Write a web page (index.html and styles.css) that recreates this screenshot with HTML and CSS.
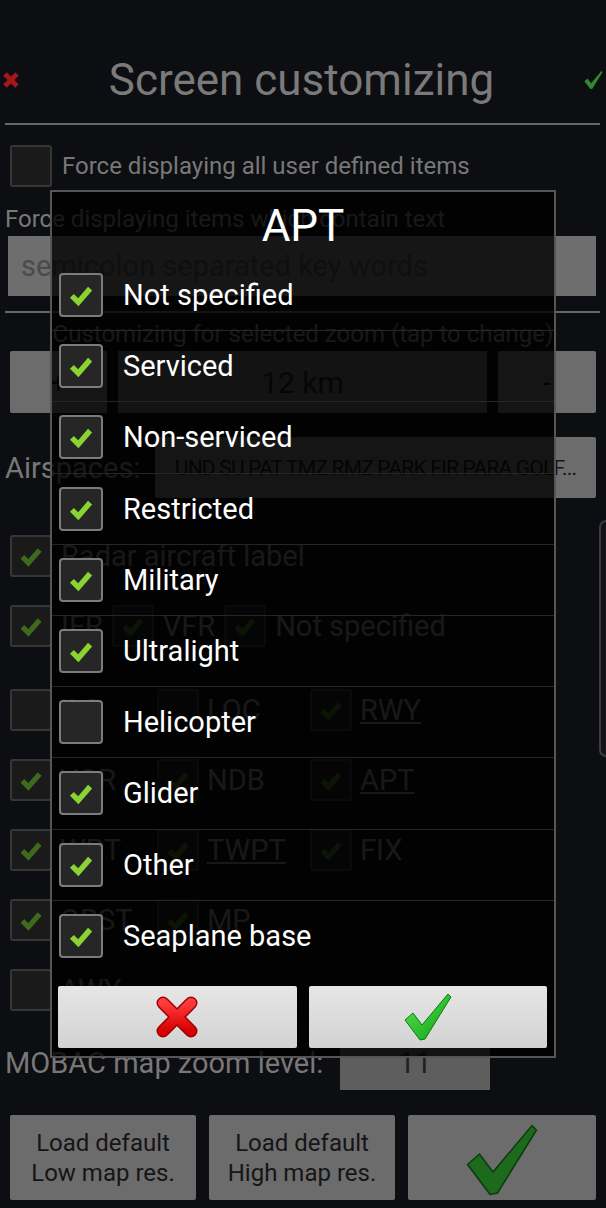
FILE: index.html
```html
<!DOCTYPE html>
<html lang="en">
<head>
    <meta charset="UTF-8">
    <meta name="viewport" content="width=device-width, initial-scale=1.0">
    <title>Screen customizing</title>
    <link rel="stylesheet" href="styles.css">
</head>
<body>
    <svg class="defs" width="0" height="0">
        <symbol id="tick" viewBox="0 0 44 44">
            <path d="M12 23l7 7 13-15" fill="none" stroke="currentColor" stroke-width="6"/>
        </symbol>
        <symbol id="bigcheck" viewBox="0 0 48 48">
            <polygon points="1,27 9,20 18,32 44,1 47,4 21,46 16,47"/>
        </symbol>
    </svg>

    <div class="screen">
        <header class="topbar">
            <svg class="top-cancel" viewBox="0 0 16 16"><path d="M2 2l12 12M14 2L2 14"/></svg>
            <h1 class="title">Screen customizing</h1>
            <svg class="top-ok" viewBox="0 0 48 48"><use href="#bigcheck"/></svg>
        </header>
        <hr class="rule">

        <div class="opt first">
            <span class="box"></span>
            <span>Force displaying all user defined items</span>
        </div>
        <p class="caption">Force displaying items which contain text</p>
        <div class="input">semicolon separated key words</div>
        <hr class="rule rule-2">

        <p class="caption zoom-caption">Customizing for selected zoom (tap to change)</p>
        <div class="zoom-row">
            <div class="btn">+</div>
            <div class="field">12 km</div>
            <div class="btn">-</div>
        </div>

        <div class="air-row">
            <span>Airspaces:</span>
            <div class="btn air-btn">UND SU PAT TMZ RMZ PARK FIR PARA GOLF...</div>
        </div>

        <div class="opt radar">
            <span class="box"><svg class="tick"><use href="#tick"/></svg></span>
            <span>Radar aircraft label</span>
        </div>
        <div class="opt">
            <span class="box"><svg class="tick"><use href="#tick"/></svg></span>
            <span>IFR</span>
            <span class="box"><svg class="tick"><use href="#tick"/></svg></span>
            <span>VFR</span>
            <span class="box"><svg class="tick"><use href="#tick"/></svg></span>
            <span>Not specified</span>
        </div>

        <div class="grid">
            <div class="cell"><span class="box"></span><span>ILS</span></div>
            <div class="cell"><span class="box"></span><span>LOC</span></div>
            <div class="cell"><span class="box"><svg class="tick"><use href="#tick"/></svg></span><span class="link">RWY</span></div>

            <div class="cell"><span class="box"><svg class="tick"><use href="#tick"/></svg></span><span>VOR</span></div>
            <div class="cell"><span class="box"><svg class="tick"><use href="#tick"/></svg></span><span>NDB</span></div>
            <div class="cell"><span class="box"><svg class="tick"><use href="#tick"/></svg></span><span class="link">APT</span></div>

            <div class="cell"><span class="box"><svg class="tick"><use href="#tick"/></svg></span><span>WPT</span></div>
            <div class="cell"><span class="box"><svg class="tick"><use href="#tick"/></svg></span><span class="link">TWPT</span></div>
            <div class="cell"><span class="box"><svg class="tick"><use href="#tick"/></svg></span><span>FIX</span></div>

            <div class="cell"><span class="box"><svg class="tick"><use href="#tick"/></svg></span><span>OBST</span></div>
            <div class="cell"><span class="box"><svg class="tick"><use href="#tick"/></svg></span><span>MP</span></div>
            <div class="cell"></div>

            <div class="cell"><span class="box"></span><span>AWY</span></div>
        </div>

        <div class="mobac-row">
            <span>MOBAC map zoom level:</span>
            <div class="field mobac-field">11</div>
        </div>

        <div class="bottom-row">
            <div class="btn big-btn">Load default<br>Low map res.</div>
            <div class="btn big-btn">Load default<br>High map res.</div>
            <div class="btn big-btn"><svg class="save-check" viewBox="0 0 48 48"><use href="#bigcheck"/></svg></div>
        </div>
    </div>

    <div class="scroll-thumb"></div>

    <div class="dialog">
        <div class="dlg-title">APT</div>
        <ul class="dlg-list">
            <li><span class="dbox"><svg class="dtick"><use href="#tick"/></svg></span>Not specified</li>
            <li><span class="dbox"><svg class="dtick"><use href="#tick"/></svg></span>Serviced</li>
            <li><span class="dbox"><svg class="dtick"><use href="#tick"/></svg></span>Non-serviced</li>
            <li><span class="dbox"><svg class="dtick"><use href="#tick"/></svg></span>Restricted</li>
            <li><span class="dbox"><svg class="dtick"><use href="#tick"/></svg></span>Military</li>
            <li><span class="dbox"><svg class="dtick"><use href="#tick"/></svg></span>Ultralight</li>
            <li><span class="dbox"></span>Helicopter</li>
            <li><span class="dbox"><svg class="dtick"><use href="#tick"/></svg></span>Glider</li>
            <li><span class="dbox"><svg class="dtick"><use href="#tick"/></svg></span>Other</li>
            <li><span class="dbox"><svg class="dtick"><use href="#tick"/></svg></span>Seaplane base</li>
        </ul>
        <div class="dlg-buttons">
            <button class="dlg-btn">
                <svg class="ic-cancel" viewBox="0 0 44 44">
                    <defs>
                        <linearGradient id="redfill" x1="0" y1="0" x2="0" y2="1">
                            <stop offset="0" stop-color="#ff3b3b"/>
                            <stop offset="1" stop-color="#d60000"/>
                        </linearGradient>
                    </defs>
                    <path class="x-edge" d="M8 8l28 28M36 8L8 36"/>
                    <path class="x-fill" d="M8 8l28 28M36 8L8 36"/>
                </svg>
            </button>
            <button class="dlg-btn">
                <svg class="ic-ok" viewBox="0 0 48 48">
                    <defs>
                        <linearGradient id="greenfill" x1="0" y1="0" x2="1" y2="1">
                            <stop offset="0" stop-color="#5be65b"/>
                            <stop offset="1" stop-color="#0b9e0b"/>
                        </linearGradient>
                    </defs>
                    <use href="#bigcheck"/>
                </svg>
            </button>
        </div>
    </div>
</body>
</html>
```

FILE: styles.css
```css
* {
    box-sizing: border-box;
}

body {
    margin: 0;
    width: 606px;
    height: 1208px;
    overflow: hidden;
    position: relative;
    background: #0d0e11;
    font-family: Roboto, "Noto Sans", sans-serif;
    color: #787878;
}

.defs {
    position: absolute;
}

/* ---- page behind the dialog (already dimmed) ---- */

.topbar {
    height: 123px;
    padding: 36px 3px 0 3px;
    display: flex;
    align-items: center;
    justify-content: space-between;
}

.title {
    margin: 0;
    font-size: 44px;
    font-weight: 400;
    color: #7a7a7a;
}

.top-cancel {
    width: 16px;
    height: 16px;
}

.top-cancel path {
    stroke: #a3161a;
    stroke-width: 5;
    fill: none;
}

.top-ok {
    width: 19px;
    height: 20px;
    fill: #2f8a2f;
}

.rule {
    margin: 0 6px 0 5px;
    border: none;
    height: 2px;
    background: #666;
}

.rule-2 {
    margin-top: 15px;
}

.opt {
    height: 70px;
    display: flex;
    align-items: center;
    gap: 9px;
    padding-left: 10px;
    font-size: 29px;
}

.opt.first {
    height: 42px;
    margin-top: 20px;
    gap: 10px;
    font-size: 24px;
}

.opt.radar {
    margin-top: 23px;
}

.box {
    width: 42px;
    height: 42px;
    flex-shrink: 0;
    border: 2px solid #363636;
    border-radius: 3px;
    background: #1a1a1a;
    color: #3d6a1d;
    display: flex;
    align-items: center;
    justify-content: center;
}

.tick {
    width: 40px;
    height: 40px;
}

.caption {
    margin: 17px 0 0 5px;
    font-size: 24px;
    line-height: 30px;
}

.zoom-caption {
    margin: 6px 0 0;
    text-align: center;
}

.input {
    margin: 2px 10px 0 8px;
    height: 60px;
    padding-left: 13px;
    background: #6e6e6e;
    color: #4a4a4a;
    font-size: 29px;
    display: flex;
    align-items: center;
}

.btn {
    background: #6c6c6c;
    color: #151515;
    display: flex;
    align-items: center;
    justify-content: center;
    border-radius: 2px;
}

.field {
    background: #5e5e5e;
    color: #222;
    display: flex;
    align-items: center;
    justify-content: center;
    font-size: 30px;
}

.zoom-row {
    margin: 2px 10px 0 10px;
    height: 62px;
    display: grid;
    grid-template-columns: 97px 1fr 98px;
    gap: 11px;
    font-size: 30px;
}

.air-row {
    margin: 24px 10px 0 5px;
    height: 61px;
    display: flex;
    align-items: center;
    font-size: 29px;
}

.air-btn {
    margin-left: auto;
    width: 441px;
    height: 100%;
    font-size: 21px;
    letter-spacing: -0.8px;
}

.grid {
    margin-top: 14px;
    padding-left: 10px;
    display: grid;
    grid-template-columns: 147px 153px 1fr;
    grid-auto-rows: 70px;
    font-size: 29px;
}

.cell {
    display: flex;
    align-items: center;
    gap: 8px;
}

.link {
    text-decoration: underline;
}

.mobac-row {
    margin: 10px 0 0 5px;
    height: 55px;
    display: flex;
    align-items: center;
    font-size: 29px;
}

.mobac-field {
    margin-left: auto;
    margin-right: 116px;
    width: 150px;
    height: 100%;
}

.bottom-row {
    margin: 25px 10px 0 10px;
    height: 85px;
    display: grid;
    grid-template-columns: 186px 186px 1fr;
    gap: 13px;
}

.big-btn {
    font-size: 24px;
    line-height: 30px;
    text-align: center;
}

.save-check {
    width: 80px;
    height: 72px;
    fill: #1d6a1d;
    stroke: #0c3a0c;
    stroke-width: 1;
    margin-top: 4px;
}

.scroll-thumb {
    position: absolute;
    top: 520px;
    right: 0;
    width: 7px;
    height: 237px;
    border: 2px solid #3a3a48;
    border-right: none;
    border-radius: 7px 0 0 7px;
    background: #131318;
}

/* ---- the APT dialog ---- */

.dialog {
    position: absolute;
    top: 190px;
    left: 50px;
    width: 506px;
    height: 868px;
    border: 2px solid #555;
    background: rgba(0, 0, 0, 0.8);
    color: #fff;
}

.dlg-title {
    height: 68px;
    display: flex;
    align-items: center;
    justify-content: center;
    font-size: 44px;
}

.dlg-list {
    list-style: none;
    margin: 0;
    padding: 0;
}

.dlg-list li {
    height: 71.2px;
    display: flex;
    align-items: center;
    padding-left: 7px;
    border-bottom: 1px solid #262626;
    font-size: 29px;
}

.dlg-list li:last-child {
    border-bottom: none;
}

.dbox {
    width: 44px;
    height: 44px;
    margin-right: 20px;
    border: 2px solid #7c7c7c;
    border-radius: 4px;
    background: #262626;
    color: #8ad332;
    display: flex;
    align-items: center;
    justify-content: center;
}

.dtick {
    width: 42px;
    height: 42px;
}

.dlg-buttons {
    margin-top: 14px;
    padding: 0 7px 0 6px;
    display: grid;
    grid-template-columns: 1fr 1fr;
    gap: 12px;
}

.dlg-btn {
    height: 62px;
    border: none;
    border-radius: 2px;
    background: linear-gradient(#e6e6e6, #d2d2d2);
    display: flex;
    align-items: center;
    justify-content: center;
    padding: 0;
}

.ic-cancel {
    width: 46px;
    height: 44px;
}

.x-edge {
    stroke: #9c0000;
    stroke-width: 13;
    stroke-linecap: round;
    fill: none;
}

.x-fill {
    stroke: url(#redfill);
    stroke-width: 10;
    stroke-linecap: round;
    fill: none;
}

.ic-ok {
    width: 50px;
    height: 48px;
    fill: url(#greenfill);
    stroke: #0a7a0a;
    stroke-width: 1;
}
```
